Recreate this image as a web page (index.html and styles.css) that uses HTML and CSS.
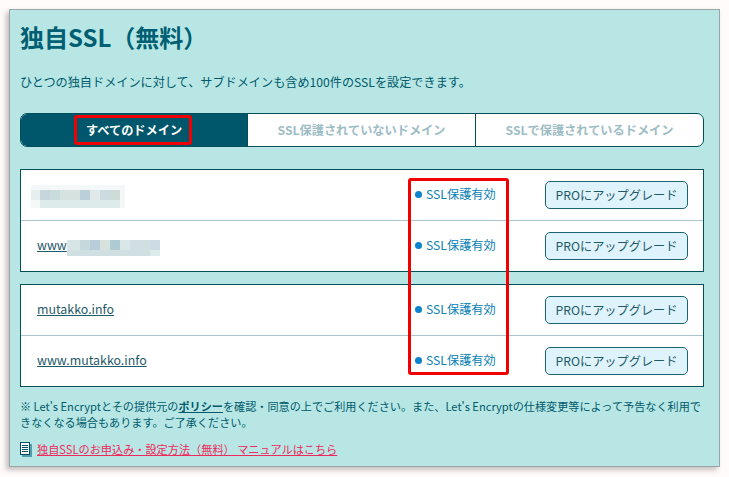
FILE: index.html
```html
<!DOCTYPE html>
<html lang="ja">
<head>
  <meta charset="UTF-8" />
  <title>独自SSL（無料）</title>
  <link rel="stylesheet" href="styles.css">
</head>
<body>

  <main class="panel">
    <h1>独自SSL（無料）</h1>
    <p class="lead">ひとつの独自ドメインに対して、サブドメインも含め100件のSSLを設定できます。</p>

    <div class="tabs">
      <a class="tab tab-active">すべてのドメイン</a>
      <a class="tab">SSL保護されていないドメイン</a>
      <a class="tab">SSLで保護されているドメイン</a>
    </div>

    <div class="domain-list">
      <div class="domain-row">
        <div class="domain-name">
          <svg class="mosaic" width="94" height="23" viewBox="0 0 94 23">
            <rect width="94" height="23" fill="#f4f8f8"/>
            <rect x="0" y="5" width="9" height="10" fill="#e6eeee"/>
            <rect x="9" y="5" width="10" height="10" fill="#c5d7dc"/>
            <rect x="19" y="5" width="10" height="10" fill="#cadbdc"/>
            <rect x="29" y="5" width="20" height="10" fill="#d5e2df"/>
            <rect x="49" y="5" width="10" height="10" fill="#b9cfda"/>
            <rect x="59" y="5" width="10" height="10" fill="#e0e8e8"/>
            <rect x="69" y="5" width="11" height="10" fill="#cbdbdf"/>
            <rect x="80" y="5" width="9" height="10" fill="#cddcd6"/>
            <rect x="9" y="15" width="80" height="8" fill="#deebeb"/>
          </svg>
        </div>
        <div class="ssl-status">SSL保護有効</div>
        <button class="upgrade-btn">PROにアップグレード</button>
      </div>
      <div class="domain-row">
        <div class="domain-name">
          <a class="domain-link">www</a><svg class="mosaic mosaic-www" width="93" height="16" viewBox="0 0 93 16">
            <rect width="93" height="16" fill="#cfdfe2"/>
            <rect x="0" y="0" width="13" height="10" fill="#d9e4e6"/>
            <rect x="13" y="0" width="10" height="10" fill="#c6d8dc"/>
            <rect x="23" y="0" width="10" height="10" fill="#b8cdd9"/>
            <rect x="33" y="0" width="10" height="10" fill="#d6e3dd"/>
            <rect x="43" y="0" width="10" height="10" fill="#aecad2"/>
            <rect x="53" y="0" width="10" height="10" fill="#dbe6e6"/>
            <rect x="83" y="0" width="10" height="10" fill="#cddbe4"/>
            <rect x="83" y="10" width="10" height="6" fill="#dcebeb"/>
          </svg>
        </div>
        <div class="ssl-status">SSL保護有効</div>
        <button class="upgrade-btn">PROにアップグレード</button>
      </div>
    </div>

    <div class="domain-list">
      <div class="domain-row">
        <div class="domain-name"><a class="domain-link">mutakko.info</a></div>
        <div class="ssl-status">SSL保護有効</div>
        <button class="upgrade-btn">PROにアップグレード</button>
      </div>
      <div class="domain-row">
        <div class="domain-name"><a class="domain-link">www.mutakko.info</a></div>
        <div class="ssl-status">SSL保護有効</div>
        <button class="upgrade-btn">PROにアップグレード</button>
      </div>
    </div>

    <p class="note">※ Let's Encryptとその提供元の<a class="note-link">ポリシー</a>を確認・同意の上でご利用ください。また、Let's Encryptの仕様変更等によって予告なく利用できなくなる場合もあります。ご了承ください。</p>

    <p class="manual">
      <svg class="manual-icon" width="12" height="15" viewBox="0 0 12 15">
        <rect x="2" y="2" width="10" height="13" fill="#4f9fae"/>
        <rect x="0.5" y="0.5" width="9" height="12" fill="#fff" stroke="#00505f"/>
        <path d="M2 3.5h6M2 5.5h6M2 7.5h6M2 9.5h6" stroke="#00505f"/>
      </svg>
      <a class="manual-link">独自SSLのお申込み・設定方法（無料） マニュアルはこちら</a>
    </p>

    <div class="mark mark-tab"></div>
    <div class="mark mark-status"></div>
  </main>

</body>
</html>
```

FILE: styles.css
```css
:root {
  --color-panel: #b7e6e4;
  --color-teal: #005a6b;
  --color-border: #00505c;
  --color-mark: #f00000;
}

html, body {
  height: 100%;
}

body {
  margin: 0;
  padding: 9px 9px 0;
  box-sizing: border-box;
  background-color: #fffbfa;
  color: var(--color-teal);
  font-family: 'Noto Sans CJK JP', 'Noto Sans', sans-serif;
  font-size: 12px;
  overflow: hidden;
}

.panel {
  position: relative;
  box-sizing: border-box;
  width: 711px;
  height: 458px;
  padding: 8px 15px 0 10px;
  background-color: var(--color-panel);
  border: 1px solid #9aa5a5;
  box-shadow: -3px 3px 5px rgba(90, 80, 80, 0.35);
}

h1 {
  margin: 0;
  height: 38px;
  font-size: 24px;
  line-height: 38px;
  font-weight: 700;
  color: #005f72;
}

.lead {
  margin: 17px 0 0;
  height: 18px;
  line-height: 18px;
  font-size: 12.15px;
}

.tabs {
  display: flex;
  height: 34px;
  margin-top: 22px;
  box-sizing: border-box;
  background: #fff;
  border: 1px solid var(--color-border);
  border-radius: 7px;
  overflow: hidden;
}

.tab {
  flex: 1;
  display: flex;
  align-items: center;
  justify-content: center;
  font-size: 12.2px;
  font-weight: 700;
  color: #9dbcc4;
  border-left: 1px solid var(--color-border);
}

.tab-active {
  flex: 0 0 226px;
  background: #00566b;
  color: #fff;
  border-left: none;
}

.domain-list {
  margin-top: 12px;
  background: #fff;
  border: 1px solid var(--color-border);
}

.tabs + .domain-list {
  margin-top: 22px;
}

.domain-row {
  display: flex;
  align-items: center;
  height: 50px;
  padding-right: 15px;
}

.domain-row + .domain-row {
  border-top: 1px solid #aac6cc;
}

.domain-name {
  display: flex;
  align-items: center;
  flex: 1;
  padding-left: 10px;
}

.domain-link {
  padding-left: 6px;
  margin-bottom: 3px;
  font-size: 12.4px;
  color: #1f5a68;
  text-decoration: underline;
}

.mosaic {
  display: block;
  margin-top: 3px;
}

.mosaic-www {
  margin-top: 3px;
}

.ssl-status {
  width: 130px;
  margin-bottom: 3px;
  color: #0a82b4;
  font-size: 12.2px;
}

.ssl-status::before {
  content: "";
  display: inline-block;
  width: 7px;
  height: 7px;
  margin-right: 4px;
  border-radius: 50%;
  background: #0a82cc;
  vertical-align: 1px;
}

.upgrade-btn {
  width: 143px;
  height: 28px;
  padding: 0;
  background: #def3fb;
  border: 1px solid #1c6472;
  border-radius: 5px;
  color: #1f5a68;
  font-family: inherit;
  font-size: 12.2px;
}

.note {
  margin: 11px 0 0;
  font-size: 11.13px;
  line-height: 16px;
}

.note-link {
  font-weight: 700;
  text-decoration: underline;
}

.manual {
  display: flex;
  align-items: center;
  gap: 5px;
  margin: 11px 0 0;
  font-size: 11.17px;
}

.manual-link {
  color: #ee2a5c;
  text-decoration: underline;
}

.mark {
  position: absolute;
  box-sizing: border-box;
  border: 3px solid var(--color-mark);
  border-radius: 3px;
}

.mark-tab {
  left: 64px;
  top: 105px;
  width: 118px;
  height: 30px;
}

.mark-status {
  left: 398px;
  top: 168px;
  width: 101px;
  height: 197px;
}
```
